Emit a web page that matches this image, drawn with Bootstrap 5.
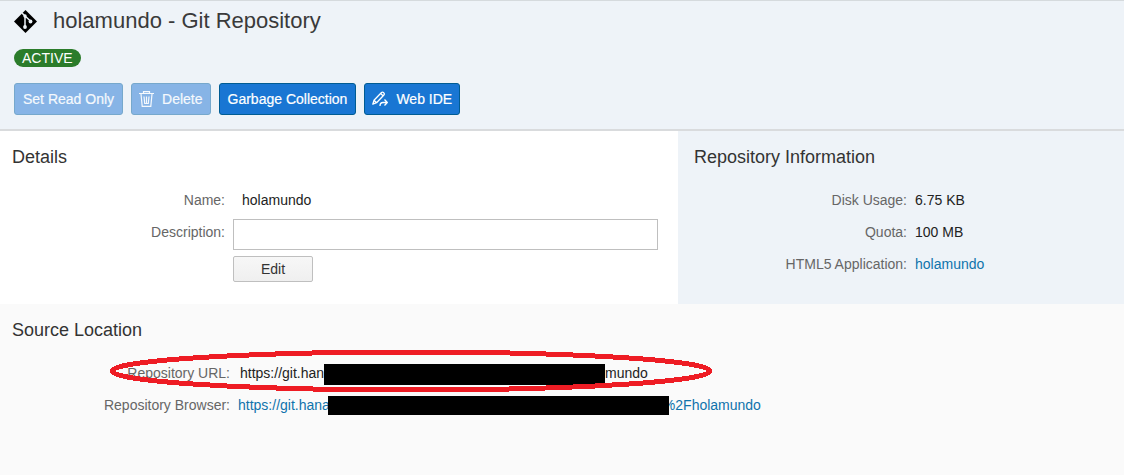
<!DOCTYPE html>
<html lang="en">
<head>
<meta charset="utf-8">
<meta name="viewport" content="width=device-width, initial-scale=1">
<title>holamundo - Git Repository</title>
<link href="https://cdn.jsdelivr.net/npm/bootstrap@5.3.0/dist/css/bootstrap.min.css" rel="stylesheet">
<style>
  body { font-family: "Liberation Sans", Arial, sans-serif; font-size: 14px; line-height: 20px; color: #222; background: #fafafa; }
  a { color: #0f73ac; text-decoration: none; }
  h1 { font-size: 22px; line-height: 28px; font-weight: 400; color: #3a3a3a; }
  h2 { font-size: 18px; line-height: 24px; font-weight: 400; color: #333; margin: 0 0 18px; }
  .page-head { background: #eef3f8; border-top: 1px solid #d5dadd; border-bottom: 2px solid #d9dbdd; padding: 6px 14px 14px; }
  .title-row { gap: 16px; }
  .state-row { margin: 14px 0 16px; }
  .state-pill { background: #2b7c2b; font-size: 14px; line-height: 18px; font-weight: 400; padding: 0 8px; }
  .action { --bs-btn-font-size: 14px; --bs-btn-line-height: 20px; --bs-btn-padding-x: 8px; --bs-btn-padding-y: 5px; --bs-btn-border-radius: 3px;
    --bs-btn-color: #fff; --bs-btn-bg: #1976d3; --bs-btn-border-color: #005c93;
    --bs-btn-hover-color: #fff; --bs-btn-hover-bg: #0f66bd; --bs-btn-hover-border-color: #005c93;
    --bs-btn-disabled-color: #f5f9fd; --bs-btn-disabled-bg: #87b4e6; --bs-btn-disabled-border-color: #76a8cc; --bs-btn-disabled-opacity: 1;
    -webkit-text-stroke: .2px; }
  .action-icon { --bs-btn-padding-x: 7px; }
  .panels { display: grid; grid-template-columns: 339fr 223fr; }
  .panel { padding: 14px 0 22px; }
  .panel h2 { padding-left: 12px; }
  .info { background: #eef3f8; }
  .panel.info h2 { padding-left: 16px; }
  .fields { display: grid; row-gap: 12px; column-gap: 8px; margin: 0; align-items: start; }
  .fields > * { margin: 0; font-weight: 400; }
  .fields dt, .fields label { color: #666; text-align: right; }
  .form-grid { grid-template-columns: 225fr 425fr; padding-right: 20px; row-gap: 6px; }
  .form-grid label { padding: 3px 0; }
  .form-grid output { padding: 3px 9px; }
  .form-grid .form-control { height: 31px; border: 1px solid #bfbfbf; border-radius: 0; font-size: 14px; }
  .edit { grid-column: 2; width: 80px; background: linear-gradient(#f7f7f7, #efefef); border: 1px solid #bfbfbf; border-radius: 2px; color: #333; font-size: 14px; line-height: 20px; padding: 2px; }
  .info-grid { grid-template-columns: 229fr 209fr; padding-top: 3px; }
  .source-grid { grid-template-columns: 115fr 443fr; padding-top: 3px; }
  .url { display: flex; height: 20px; white-space: nowrap; }
  .url-plain { padding-left: 2px; }
  .censor { position: relative; flex: none; background: #000; margin-top: 1px; }
  .censor-url { width: 281px; height: 21px; }
  .censor-browser { width: 341px; height: 19px; margin-left: -2px; }
  .tucked { margin-left: -6px; }
  .marker { position: absolute; left: -129px; top: -14px; pointer-events: none; }
</style>
</head>
<body>
<header class="page-head">
  <div class="title-row d-flex align-items-center">
    <svg width="23" height="23" viewBox="0 0 23 23" aria-hidden="true">
      <path d="M11.500 0L23 11.500L11.500 23L0 11.500Z"/>
      <path d="M8 3L11 6V17M11 6L17 11.500" fill="none" stroke="#eef3f8" stroke-width="1.500"/>
      <circle cx="11" cy="6" r="1.700" fill="#eef3f8"/><circle cx="11" cy="17" r="1.900" fill="#eef3f8"/><circle cx="16.500" cy="11.500" r="1.900" fill="#eef3f8"/>
    </svg>
    <h1 class="m-0">holamundo - Git Repository</h1>
  </div>
  <div class="state-row d-flex"><span class="state-pill badge rounded-pill">ACTIVE</span></div>
  <div class="d-flex flex-wrap gap-2">
    <button type="button" class="btn action" disabled>Set Read Only</button>
    <button type="button" class="btn action action-icon d-flex align-items-center gap-2" disabled>
      <svg width="15" height="16" viewBox="0 0 15 16" fill="none" stroke="currentColor" stroke-width="1.200" aria-hidden="true"><path d="M0 2.500H15M4.500 2V.600H10.500V2M2 3L3.200 15.400H11.800L13 3M5 5.500L5.700 12.500H9.300L10 5.500M7.500 5.500V12.500"/></svg>
      Delete</button>
    <button type="button" class="btn action">Garbage Collection</button>
    <button type="button" class="btn action action-icon d-flex align-items-center gap-2">
      <svg width="16" height="16" viewBox="0 0 16 16" fill="none" stroke="currentColor" stroke-width="1.300" stroke-linejoin="round" aria-hidden="true"><path d="M.800 13.200L2 9.300L9.500 1.500Q10.500.700 11.500 1.600L12 2.200Q12.700 3.200 11.900 4L4.600 11.700ZM2 9.300L4.600 11.700M8.700 2.500L11 4.800M8 15Q8 11.500 11 11.500H15M12.500 8.500L15.300 11.500L12.500 14.500"/></svg>
      Web IDE</button>
  </div>
</header>
<main>
  <div class="panels">
    <section class="panel bg-white">
      <h2>Details</h2>
      <form class="fields form-grid">
        <label for="repo-name">Name:</label><output id="repo-name">holamundo</output>
        <label for="description">Description:</label><input id="description" type="text" class="form-control">
        <button type="button" class="edit">Edit</button>
      </form>
    </section>
    <section class="panel info">
      <h2>Repository Information</h2>
      <dl class="fields info-grid">
        <dt>Disk Usage:</dt><dd>6.75 KB</dd>
        <dt>Quota:</dt><dd>100 MB</dd>
        <dt>HTML5 Application:</dt><dd><a href="#">holamundo</a></dd>
      </dl>
    </section>
  </div>
  <section class="panel">
    <h2>Source Location</h2>
    <dl class="fields source-grid">
      <dt>Repository URL:</dt>
      <dd class="url url-plain position-relative"><span>https://git.han</span><span class="censor censor-url"></span><span>mundo</span>
        <svg class="marker" width="604" height="46" viewBox="0 0 604 46" shape-rendering="crispEdges" aria-hidden="true"><ellipse cx="302" cy="22" rx="299" ry="19" fill="none" stroke="#ee1c24" stroke-width="5"/></svg>
      </dd>
      <dt>Repository Browser:</dt>
      <dd><a class="url" href="#"><span>https://git.hana</span><span class="censor censor-browser"></span><span class="tucked">%2Fholamundo</span></a></dd>
    </dl>
  </section>
</main>
<script src="https://cdn.jsdelivr.net/npm/bootstrap@5.3.0/dist/js/bootstrap.bundle.min.js"></script>
</body>
</html>
